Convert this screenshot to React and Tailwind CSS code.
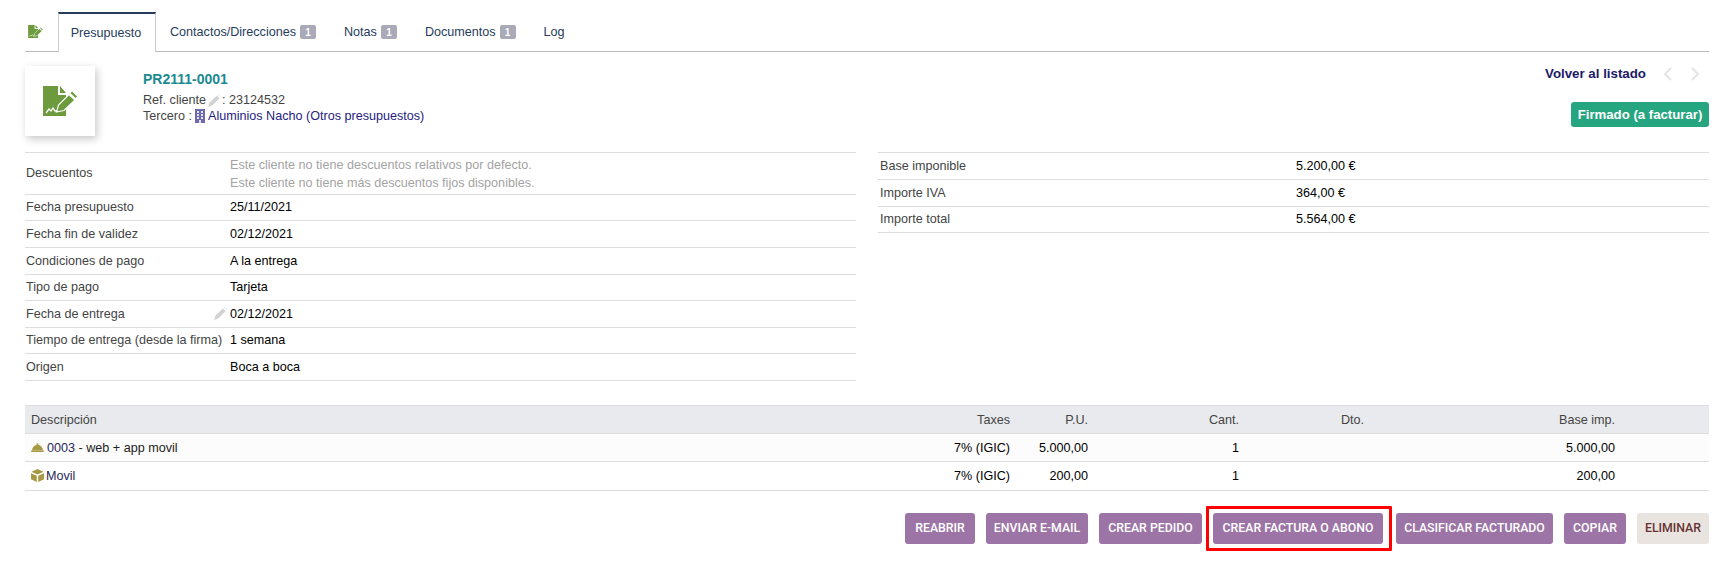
import React from 'react';

const leftRows = [
  { label: 'Fecha presupuesto', value: '25/11/2021', height: 'h-[26px]' },
  { label: 'Fecha fin de validez', value: '02/12/2021', height: 'h-[27px]' },
  { label: 'Condiciones de pago', value: 'A la entrega', height: 'h-[27px]' },
  { label: 'Tipo de pago', value: 'Tarjeta', height: 'h-[26px]' },
  { label: 'Fecha de entrega', value: '02/12/2021', height: 'h-[27px]', editable: true },
  { label: 'Tiempo de entrega (desde la firma)', value: '1 semana', height: 'h-[26px]' },
  { label: 'Origen', value: 'Boca a boca', height: 'h-[27px]' },
];

const totals = [
  { label: 'Base imponible', value: '5.200,00 €', height: 'h-[27px]' },
  { label: 'Importe IVA', value: '364,00 €', height: 'h-[27px]' },
  { label: 'Importe total', value: '5.564,00 €', height: 'h-[26px]' },
];

const lines = [
  { code: '0003', name: ' - web + app movil', kind: 'service', taxes: '7% (IGIC)', price: '5.000,00', qty: '1', total: '5.000,00', height: 'h-[28px] pt-[1px]' },
  { code: 'Movil', name: '', kind: 'product', taxes: '7% (IGIC)', price: '200,00', qty: '1', total: '200,00', height: 'h-[28px]' },
];

const gridCols = 'grid grid-cols-[905px_80px_78px_151px_125px_251px_94px] items-center';

function DocIcon({ className }) {
  return (
    <svg viewBox="0 0 34 30" className={className}>
      <path d="M0 0h15v9h8v21H0z" fill="#6c9a3c" />
      <path d="M17 0l6 7h-6z" fill="#6c9a3c" />
      <path d="M3 27l3-4 2 2 2-3 2 3 3 0" fill="none" stroke="#fff" strokeWidth="1.3" />
      <path d="M13.5 26l2-7L26 8.5l6 5.5L21 24.5z" fill="#6c9a3c" stroke="#fff" strokeWidth="1.2" />
      <path d="M27.5 7l1.5-1.5 5 5-1.5 1.5z" fill="#6c9a3c" />
    </svg>
  );
}

function Pencil({ className }) {
  return (
    <svg viewBox="0 0 14 14" className={className}>
      <path d="M0 14l1.5-4.5L9.5 1.5l3 3L4.5 12.5z" fill="#d2d2d2" />
      <path d="M10.5.5L11 0l3 3-.5.5z" fill="#e2e2e2" />
    </svg>
  );
}

function Building() {
  return (
    <svg viewBox="0 0 10 14" className="h-[14px] w-[10px]">
      <rect width="10" height="14" fill="#6c6aa8" />
      <path d="M2 2h2v2H2zM6 2h2v2H6zM2 5h2v2H2zM6 5h2v2H6zM2 8h2v2H2zM6 8h2v2H6zM4 11h2v3H4z" fill="#dfe0f0" />
    </svg>
  );
}

function ServiceIcon() {
  return (
    <svg viewBox="0 0 14 10" className="mr-[3px] h-[9px] w-[13px]">
      <path d="M1 8a6 6 0 0 1 12 0z" fill="#a69944" />
      <rect x="0" y="8.2" width="14" height="1.8" fill="#a69944" />
      <rect x="6" y="0.5" width="2" height="2" fill="#a69944" />
    </svg>
  );
}

function ProductIcon() {
  return (
    <svg viewBox="0 0 14 14" className="mr-[2px] h-[13px] w-[13px]">
      <path d="M7 0l6.5 3L7 6 .5 3z" fill="#a69944" />
      <path d="M0 4.5l6.2 2.8V14L0 11z" fill="#a69944" />
      <path d="M14 4.5L7.8 7.3V14l6.2-3z" fill="#a69944" />
    </svg>
  );
}

function Chevron({ left }) {
  return (
    <svg viewBox="0 0 10 14" className="h-[14px] w-[10px]">
      <path d={left ? 'M8 1L2 7l6 6' : 'M2 1l6 6-6 6'} fill="none" stroke="#e4e4e4" strokeWidth="2" />
    </svg>
  );
}

function Tab({ label, count }) {
  return (
    <div className="flex h-[39px] items-center px-[14px] pt-[1px] text-[#263c5c]">
      <span>{label}</span>
      {count && (
        <span className="ml-[4px] flex h-[14px] w-[16px] items-center justify-center rounded-[2px] bg-[#a9a9b8] text-[10px] font-bold text-white">
          {count}
        </span>
      )}
    </div>
  );
}

function ActionButton({ label, width, muted, marked }) {
  return (
    <div
      className={`relative flex h-[31px] ${width} items-center justify-center rounded-[3px] font-['Roboto',sans-serif] text-[12.3px] font-medium uppercase ${
        muted ? 'bg-[#eae4e1] text-[#633]' : 'bg-[#9c75a6] text-white'
      } ${marked ? 'mr-[2px]' : ''}`}
    >
      {label}
      {marked && (
        <span className="absolute -bottom-[7px] -left-[7px] -right-[9px] -top-[7px] rounded-[1px] border-[3px] border-[#f00]" />
      )}
    </div>
  );
}

export default function App() {
  return (
    <div className="h-[568px] w-[1725px] overflow-hidden bg-white pl-[25px] pr-[16px] pt-[12px] font-['Liberation_Sans',Arial,sans-serif] text-[12.6px] text-black">
      {/* tabs */}
      <div className="flex h-[40px] items-end border-b border-[#bbb]">
        <div className="flex h-[39px] w-[33px] items-center pl-[3px]">
          <DocIcon className="h-[13px] w-[15px]" />
        </div>
        <div className="-mb-px flex h-[40px] w-[98px] items-center justify-center border-x border-t-2 border-x-[#ccc] border-t-[#263c5c] bg-white pr-[2px] text-[#263c5c]">
          Presupuesto
        </div>
        <Tab label="Contactos/Direcciones" count="1" />
        <Tab label="Notas" count="1" />
        <Tab label="Documentos" count="1" />
        <Tab label="Log" />
      </div>

      {/* card header */}
      <div className="flex h-[100px] items-start justify-between">
        <div className="flex">
          <div className="mt-[14px] flex h-[70px] w-[70px] items-center justify-center shadow-[2px_3px_8px_rgba(0,0,0,0.22)]">
            <DocIcon className="h-[30px] w-[34px]" />
          </div>
          <div className="ml-[48px] mt-[18px] text-[#444]">
            <div className="text-[14px] font-bold leading-[18px] text-[#1b8a8f]">PR2111-0001</div>
            <div className="mt-[4px] flex h-[16px] items-center">
              Ref. cliente <Pencil className="ml-[2px] mr-[1px] h-[13px] w-[13px]" /> : 23124532
            </div>
            <div className="flex h-[16px] items-center">
              Tercero : <span className="ml-[3px] mr-[3px]"><Building /></span>
              <span className="text-[#262280]">Aluminios Nacho (Otros presupuestos)</span>
            </div>
          </div>
        </div>
        <div className="flex flex-col items-end">
          <div className="mt-[14px] flex h-[16px] items-center text-[13.3px] font-bold text-[#1c1a66]">
            Volver al listado
            <span className="ml-[17px]"><Chevron left /></span>
            <span className="ml-[17px] mr-[9px]"><Chevron /></span>
          </div>
          <div className="mt-[20px] flex h-[25px] w-[138px] items-center justify-center rounded-[3px] bg-[#25a580] text-[13.2px] font-bold text-white">
            Firmado (a facturar)
          </div>
        </div>
      </div>

      {/* details */}
      <div className="flex h-[253px] items-start gap-[22px] text-[#444]">
        <div className="w-[831px] border-t border-[#ddd]">
          <div className="flex h-[42px] items-center border-b border-[#ddd] pl-[1px]">
            <div className="w-[204px]">Descuentos</div>
            <div className="leading-[18px] text-[#a3a3a3]">
              <div>Este cliente no tiene descuentos relativos por defecto.</div>
              <div>Este cliente no tiene más descuentos fijos disponibles.</div>
            </div>
          </div>
          {leftRows.map(({ label, value, height, editable }) => (
            <div key={label} className={`flex ${height} items-center border-b border-[#ddd] pl-[1px]`}>
              <div className="flex w-[204px] items-center justify-between pr-[3px]">
                <span className="whitespace-nowrap">{label}</span>
                {editable && <Pencil className="h-[13px] w-[13px]" />}
              </div>
              <div className="text-black">{value}</div>
            </div>
          ))}
        </div>
        <div className="w-[831px] border-t border-[#ddd]">
          {totals.map(({ label, value, height }) => (
            <div key={label} className={`flex ${height} items-center border-b border-[#ddd] pl-[2px]`}>
              <div className="w-[416px]">{label}</div>
              <div className="text-black">{value}</div>
            </div>
          ))}
        </div>
      </div>

      {/* lines */}
      <div className="border-b border-[#ddd]">
        <div className={`${gridCols} h-[29px] border-y border-[#ddd] bg-[#e9eaed] pt-[1px] text-[#444]`}>
          <div className="pl-[6px]">Descripción</div>
          <div className="text-right">Taxes</div>
          <div className="text-right">P.U.</div>
          <div className="text-right">Cant.</div>
          <div className="text-right">Dto.</div>
          <div className="text-right">Base imp.</div>
          <div />
        </div>
        {lines.map(({ code, name, kind, taxes, price, qty, total, height }, index) => (
          <div
            key={code}
            className={`${gridCols} ${height} ${index === 0 ? 'border-b border-[#ddd] bg-[#fcfcfc]' : ''}`}
          >
            <div className="flex items-center pl-[6px]">
              {kind === 'service' ? <ServiceIcon /> : <ProductIcon />}
              <span className="whitespace-pre text-[#222]">
                <span className="text-[#2a2a5a]">{code}</span>
                {name}
              </span>
            </div>
            <div className="text-right">{taxes}</div>
            <div className="text-right">{price}</div>
            <div className="text-right">{qty}</div>
            <div />
            <div className="text-right">{total}</div>
            <div />
          </div>
        ))}
      </div>

      {/* actions */}
      <div className="mt-[22px] flex justify-end gap-[11px]">
        <ActionButton label="Reabrir" width="w-[70px]" />
        <ActionButton label="Enviar e-mail" width="w-[102px]" />
        <ActionButton label="Crear pedido" width="w-[103px]" />
        <ActionButton label="Crear factura o abono" width="w-[170px]" marked />
        <ActionButton label="Clasificar facturado" width="w-[157px]" />
        <ActionButton label="Copiar" width="w-[62px]" />
        <ActionButton label="Eliminar" width="w-[72px]" muted />
      </div>
    </div>
  );
}
